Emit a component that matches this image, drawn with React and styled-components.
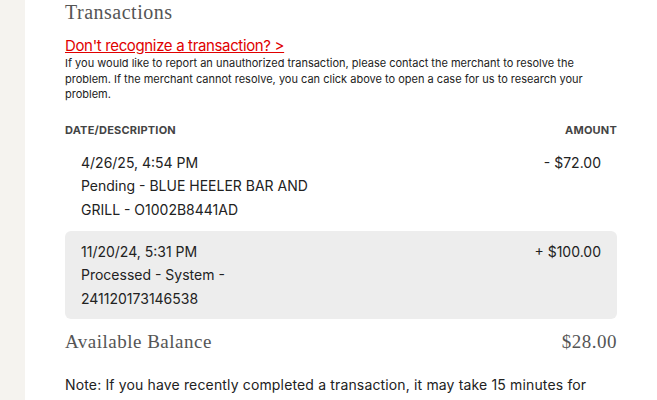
import React from "react";
import styled, { createGlobalStyle } from "styled-components";

const Global = createGlobalStyle`
  html, body { margin: 0; padding: 0; background: #fff; }
  body { font-family: Inter, "Liberation Sans", Arial, sans-serif; color: #222; }
`;

const Page = styled.div`
  display: flex;
  min-height: 400px;
`;

const Sidebar = styled.aside`
  width: 25px;
  flex: none;
  background: #f5f3ef;
`;

const Main = styled.main`
  width: 552px;
  padding: 0 40px;
`;

const SerifTitle = styled.h2`
  margin: 0;
  font-family: "Liberation Serif", "Times New Roman", serif;
  font-weight: 400;
  font-size: ${p => p.$size || 20}px;
  letter-spacing: 0.5px;
  line-height: 24px;
  color: #555;
`;

const HelpLink = styled.a`
  display: inline-block;
  margin-top: 12px;
  font-size: 15px;
  letter-spacing: -0.35px;
  line-height: 20px;
  color: #e00000;
  text-decoration: underline;
  cursor: pointer;
`;

const HelpText = styled.p`
  margin: 0;
  font-size: 11px;
  line-height: 15.5px;
  color: #222;
`;

const TableHead = styled.div`
  display: flex;
  justify-content: space-between;
  margin-top: 20px;
  font-size: 11px;
  font-weight: 700;
  letter-spacing: 0.2px;
  line-height: 14px;
  color: #444;
  text-transform: uppercase;
`;

const List = styled.div`
  display: flex;
  flex-direction: column;
  gap: 1px;
  margin-top: 5px;
`;

const Row = styled.div`
  display: flex;
  justify-content: space-between;
  align-items: flex-start;
  padding: 9px 16px 8.5px 16px;
  border-radius: 6px;
  background: ${p => (p.$shaded ? "#ededed" : "transparent")};
  font-size: 14px;
  line-height: 23.5px;
  color: #222;
`;

const Desc = styled.div`
  width: 250px;
`;

const Amount = styled.div`
  white-space: nowrap;
`;

const BalanceRow = styled.div`
  display: flex;
  justify-content: space-between;
  align-items: center;
  margin-top: 11px;
`;

const Note = styled.p`
  margin: 20px 0 0;
  font-size: 14px;
  letter-spacing: 0.15px;
  line-height: 22px;
  color: #222;
`;

const txns = [
  { date: "4/26/25, 4:54 PM", desc: "Pending - BLUE HEELER BAR AND GRILL - O1002B8441AD", amount: "- $72.00" },
  { date: "11/20/24, 5:31 PM", desc: "Processed - System - 241120173146538", amount: "+ $100.00", shaded: true },
];

export default function App() {
  return (
    <Page>
      <Global />
      <Sidebar />
      <Main>
        <SerifTitle>Transactions</SerifTitle>
        <HelpLink>Don't recognize a transaction? &gt;</HelpLink>
        <HelpText>
          If you would like to report an unauthorized transaction, please contact the merchant to resolve the
          <br />
          problem. If the merchant cannot resolve, you can click above to open a case for us to research your
          <br />
          problem.
        </HelpText>
        <TableHead>
          <span>Date/Description</span>
          <span>Amount</span>
        </TableHead>
        <List>
          {txns.map(t => (
            <Row key={t.date} $shaded={t.shaded}>
              <Desc>
                <div>{t.date}</div>
                <div>{t.desc}</div>
              </Desc>
              <Amount>{t.amount}</Amount>
            </Row>
          ))}
        </List>
        <BalanceRow>
          <SerifTitle $size={19}>Available Balance</SerifTitle>
          <SerifTitle $size={19}>$28.00</SerifTitle>
        </BalanceRow>
        <Note>Note: If you have recently completed a transaction, it may take 15 minutes for</Note>
      </Main>
    </Page>
  );
}
